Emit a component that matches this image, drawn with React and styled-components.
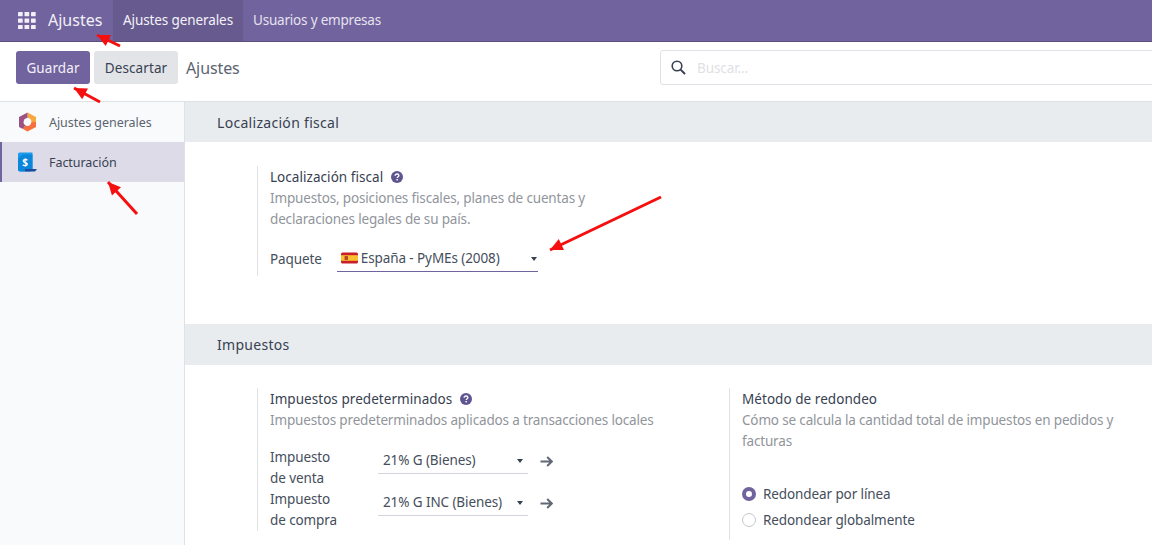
import React from 'react';
import styled, { createGlobalStyle } from 'styled-components';

const GlobalStyle = createGlobalStyle`
  html, body {
    margin: 0;
    padding: 0;
    height: 100%;
    overflow: hidden;
    background: #fff;
  }
  * { box-sizing: border-box; }
  #root { height: 100%; }
`;

const Page = styled.div`
  position: relative;
  height: 545px;
  width: 1152px;
  overflow: hidden;
  display: flex;
  flex-direction: column;
  font-family: "Noto Sans", "Open Sans", sans-serif;
  font-size: 13.5px;
  letter-spacing: -0.1px;
  color: #454e5b;
`;

const Navbar = styled.nav`
  display: flex;
  align-items: stretch;
  height: 42px;
  flex-shrink: 0;
  background: #71639e;
  border-bottom: 1px solid #5a4f7f;
  color: #f2f0f7;
`;

const AppsButton = styled.div`
  display: flex;
  align-items: center;
  padding-left: 18px;
  width: 48px;
`;

const Brand = styled.div`
  display: flex;
  align-items: center;
  width: 65px;
  padding-bottom: 1px;
  font-size: 16px;
  letter-spacing: 0;
`;

const NavItem = styled.div`
  display: flex;
  align-items: center;
  padding: 0 10px 2px;
  letter-spacing: ${(p) => (p.$active ? '-0.1px' : '-0.2px')};
  background: ${(p) => (p.$active ? '#665a8f' : 'transparent')};
  color: ${(p) => (p.$active ? '#f4f2f8' : '#e6e2ef')};
`;

const ControlPanel = styled.div`
  display: flex;
  align-items: center;
  height: 60px;
  flex-shrink: 0;
  padding: 0 0 8px 16px;
  background: #fff;
  border-bottom: 1px solid #dee2e6;
`;

const Button = styled.button`
  flex-shrink: 0;
  height: 33px;
  padding: 0;
  width: ${(p) => p.$w}px;
  margin-right: 4px;
  border: none;
  border-radius: 3px;
  font: inherit;
  letter-spacing: 0.1px;
  background: ${(p) => (p.$primary ? '#71639e' : '#e2e4e8')};
  color: ${(p) => (p.$primary ? '#f2f0f7' : '#374151')};
`;

const Breadcrumb = styled.div`
  flex-shrink: 0;
  width: 478px;
  padding-left: 4px;
  font-size: 16px;
  color: #5b6470;
`;

const SearchBox = styled.div`
  display: flex;
  align-items: center;
  flex-shrink: 0;
  width: 520px;
  height: 35px;
  padding-left: 10px;
  gap: 11px;
  border: 1px solid #dee2e6;
  border-radius: 3px;
  color: #dfe1e5;
`;

const Body = styled.div`
  display: flex;
  flex: 1;
  min-height: 0;
`;

const Sidebar = styled.aside`
  width: 185px;
  flex-shrink: 0;
  background: #f9fafb;
  border-right: 1px solid #dee2e6;
`;

const SideItem = styled.div`
  display: flex;
  align-items: center;
  gap: 12px;
  height: 40px;
  padding-left: ${(p) => (p.$active ? '15px' : '18px')};
  font-size: 12.5px;
  letter-spacing: -0.05px;
  background: ${(p) => (p.$active ? '#dedbe8' : 'transparent')};
  border-left: ${(p) => (p.$active ? '2px solid #71639e' : 'none')};
  color: ${(p) => (p.$active ? '#374151' : '#5b6470')};
`;

const Content = styled.main`
  flex: 1;
  min-width: 0;
`;

const SectionHeader = styled.h2`
  display: flex;
  align-items: center;
  height: ${(p) => p.$h}px;
  margin: 0;
  padding-left: 32px;
  background: #e9ecef;
  font-size: 14px;
  font-weight: 400;
  letter-spacing: 0.3px;
  color: #374151;
`;

const SectionBody = styled.div`
  display: grid;
  grid-template-columns: 472px 1fr;
  align-items: start;
  padding: ${(p) => p.$pad};
  padding-left: 72px;
`;

const Setting = styled.div`
  border-left: 1px solid #dee2e6;
  padding: 0 10px ${(p) => p.$bottom || 0}px 12px;
`;

const Title = styled.div`
  display: flex;
  align-items: center;
  gap: 8px;
  height: 21px;
  letter-spacing: 0.05px;
  color: #374151;
`;

const Help = styled.span`
  display: inline-flex;
  color: #5e5590;
`;

const Desc = styled.div`
  margin-top: 1px;
  line-height: 21px;
  letter-spacing: -0.16px;
  color: #91959b;
`;

const PackageRow = styled.div`
  display: flex;
  align-items: center;
  gap: 15px;
  margin: 15px 0 4px;
  height: 27px;
`;

const SelectField = styled.div`
  display: flex;
  align-items: center;
  justify-content: space-between;
  width: ${(p) => p.$w}px;
  height: 27px;
  padding: 0 ${(p) => p.$right}px 0 ${(p) => p.$left}px;
  border-bottom: 1px solid ${(p) => (p.$focus ? '#71639e' : '#d1d5db')};
`;

const SelectValue = styled.span`
  display: flex;
  align-items: center;
  gap: 3px;
  white-space: nowrap;
`;

const Caret = styled.span`
  width: 0;
  height: 0;
  margin-top: 2px;
  border-left: 3.5px solid transparent;
  border-right: 3.5px solid transparent;
  border-top: 4px solid #374151;
`;

const TaxGrid = styled.div`
  display: grid;
  grid-template-columns: 108px auto;
  margin-top: 16px;
  justify-content: start;
`;

const TaxRow = styled.div`
  display: contents;
`;

const TaxLabel = styled.div`
  line-height: 21px;
`;

const TaxControl = styled.div`
  display: flex;
  align-items: flex-start;
  gap: 12px;
`;

const ArrowLink = styled.span`
  display: flex;
  height: 27px;
  padding-top: 2px;
  align-items: center;
  color: #5f6875;
`;

const RadioGroup = styled.div`
  display: flex;
  flex-direction: column;
  gap: 5px;
  margin-top: 31px;
`;

const RadioRow = styled.label`
  display: flex;
  align-items: center;
  gap: 7px;
  height: 21px;
`;

const RadioDot = styled.span`
  width: 14px;
  height: 14px;
  border-radius: 50%;
  background: #fff;
  border: ${(p) => (p.$on ? '4px solid #71639e' : '1px solid #c4c8ce')};
`;

const Overlay = styled.svg`
  position: absolute;
  inset: 0;
  pointer-events: none;
`;

const AppsIcon = () => (
  <svg width="18" height="17" viewBox="0 0 18 17" fill="#f2f0f7">
    {[0, 6.5, 13].map((y) =>
      [0, 6.5, 13].map((x) => <rect key={`${x}-${y}`} x={x} y={y} width="4.7" height="4.2" rx="0.4" />)
    )}
  </svg>
);

const SearchIcon = () => (
  <svg width="15" height="15" viewBox="0 0 15 15" fill="none" stroke="#374151" strokeWidth="1.6">
    <circle cx="6" cy="6" r="4.8" />
    <path d="M9.6 9.6 L14 14" strokeWidth="2" />
  </svg>
);

const SettingsLogo = () => (
  <svg width="19" height="20" viewBox="0 0 19 20">
    <path d="M9.5 0.5 L18 5 L18 10 L13.4 10 A3.9 3.9 0 0 0 9.5 6.1 Z" fill="#f7a83e" />
    <path d="M18 10 L18 15 L9.5 19.5 L5 17 L7.4 13.3 A3.9 3.9 0 0 0 13.4 10 Z" fill="#f9703f" />
    <path d="M9.5 0.5 L1 5 L1 15 L5 17 L7.4 13.3 A3.9 3.9 0 0 1 9.5 6.1 Z" fill="#9c5283" />
  </svg>
);

const InvoiceLogo = () => (
  <svg width="20" height="20" viewBox="0 0 20 20">
    <path d="M1 2 Q1 0.5 2.5 0.5 H15.5 V17 Q15.5 19.5 13 19.5 H3.5 Q1 19.5 1 17 Z" fill="#1b9be9" />
    <path d="M1 6 L6 2.5 H15.5 V17 H8 V19.5 H3.5 Q1 19.5 1 17 Z" fill="#0a86da" />
    <path d="M8 17 H20 L18 19.5 H8 Z" fill="#1c4a9c" />
    <text x="8.2" y="13.5" fontSize="10" fontWeight="700" fill="#fff" textAnchor="middle" fontFamily="Noto Sans">$</text>
  </svg>
);

const HelpIcon = () => (
  <Help>
    <svg width="12" height="12" viewBox="0 0 12 12">
      <circle cx="6" cy="6" r="6" fill="currentColor" />
      <path d="M4.1 4.7 C4.1 3.5 5 3 6 3 C7.1 3 7.9 3.6 7.9 4.5 C7.9 5.7 6.2 5.7 6.2 7" fill="none" stroke="#fff" strokeWidth="1.3" />
      <rect x="5.4" y="8" width="1.5" height="1.4" fill="#fff" />
    </svg>
  </Help>
);

const SpainFlag = () => (
  <svg width="17" height="12" viewBox="0 0 17 12">
    <rect x="0" y="0.5" width="17" height="11" rx="1.5" fill="#c8202a" />
    <rect x="0" y="3.2" width="17" height="5.6" fill="#fbc02d" />
    <rect x="3.5" y="4" width="3.5" height="4" rx="0.8" fill="#b5482a" />
  </svg>
);

const RightArrow = () => (
  <svg width="13" height="11" viewBox="0 0 13 11" fill="none" stroke="currentColor" strokeWidth="2">
    <path d="M0.5 5.5 H11.5 M7.2 1 L11.8 5.5 L7.2 10" />
  </svg>
);

const RED_ARROWS = [
  { from: [120, 46], to: [97, 35] },
  { from: [100, 102], to: [74, 88] },
  { from: [137, 214], to: [108, 182] },
  { from: [661, 197], to: [550, 250] },
];

const ArrowHead = ({ from, to }) => {
  const a = Math.atan2(to[1] - from[1], to[0] - from[0]);
  const size = 14;
  const spread = 0.45;
  const left = [to[0] - size * Math.cos(a - spread), to[1] - size * Math.sin(a - spread)];
  const right = [to[0] - size * Math.cos(a + spread), to[1] - size * Math.sin(a + spread)];
  return <polygon points={`${to.join(',')} ${left.join(',')} ${right.join(',')}`} fill="#f50f0f" />;
};

const App = () => (
  <Page>
    <GlobalStyle />
    <Navbar>
      <AppsButton>
        <AppsIcon />
      </AppsButton>
      <Brand>Ajustes</Brand>
      <NavItem $active>Ajustes generales</NavItem>
      <NavItem>Usuarios y empresas</NavItem>
    </Navbar>
    <ControlPanel>
      <Button $primary $w={74}>Guardar</Button>
      <Button $w={84}>Descartar</Button>
      <Breadcrumb>Ajustes</Breadcrumb>
      <SearchBox>
        <SearchIcon />
        Buscar...
      </SearchBox>
    </ControlPanel>
    <Body>
      <Sidebar>
        <SideItem>
          <SettingsLogo />
          Ajustes generales
        </SideItem>
        <SideItem $active>
          <InvoiceLogo />
          Facturación
        </SideItem>
      </Sidebar>
      <Content>
        <SectionHeader $h={40}>Localización fiscal</SectionHeader>
        <SectionBody $pad="24px 0 48px">
          <Setting>
            <Title>
              Localización fiscal
              <HelpIcon />
            </Title>
            <Desc>
              Impuestos, posiciones fiscales, planes de cuentas y
              <br />
              declaraciones legales de su país.
            </Desc>
            <PackageRow>
              Paquete
              <SelectField $w={201} $left={4} $right={1} $focus>
                <SelectValue>
                  <SpainFlag />
                  España - PyMEs (2008)
                </SelectValue>
                <Caret />
              </SelectField>
            </PackageRow>
          </Setting>
        </SectionBody>
        <SectionHeader $h={41}>Impuestos</SectionHeader>
        <SectionBody $pad="23px 0 0">
          <Setting>
            <Title>
              Impuestos predeterminados
              <HelpIcon />
            </Title>
            <Desc>Impuestos predeterminados aplicados a transacciones locales</Desc>
            <TaxGrid>
              <TaxRow>
                <TaxLabel>
                  Impuesto
                  <br />
                  de venta
                </TaxLabel>
                <TaxControl>
                  <SelectField $w={150} $left={5} $right={5}>
                    <SelectValue>21% G (Bienes)</SelectValue>
                    <Caret />
                  </SelectField>
                  <ArrowLink>
                    <RightArrow />
                  </ArrowLink>
                </TaxControl>
              </TaxRow>
              <TaxRow>
                <TaxLabel>
                  Impuesto
                  <br />
                  de compra
                </TaxLabel>
                <TaxControl>
                  <SelectField $w={150} $left={5} $right={5}>
                    <SelectValue>21% G INC (Bienes)</SelectValue>
                    <Caret />
                  </SelectField>
                  <ArrowLink>
                    <RightArrow />
                  </ArrowLink>
                </TaxControl>
              </TaxRow>
            </TaxGrid>
          </Setting>
          <Setting $bottom={10}>
            <Title>Método de redondeo</Title>
            <Desc>Cómo se calcula la cantidad total de impuestos en pedidos y facturas</Desc>
            <RadioGroup>
              <RadioRow>
                <RadioDot $on />
                Redondear por línea
              </RadioRow>
              <RadioRow>
                <RadioDot />
                Redondear globalmente
              </RadioRow>
            </RadioGroup>
          </Setting>
        </SectionBody>
      </Content>
    </Body>
    <Overlay width="1152" height="545">
      {RED_ARROWS.map((arrow) => (
        <g key={arrow.from.join('-')}>
          <line
            x1={arrow.from[0]}
            y1={arrow.from[1]}
            x2={arrow.to[0]}
            y2={arrow.to[1]}
            stroke="#f50f0f"
            strokeWidth="3"
          />
          <ArrowHead from={arrow.from} to={arrow.to} />
        </g>
      ))}
    </Overlay>
  </Page>
);

export default App;
